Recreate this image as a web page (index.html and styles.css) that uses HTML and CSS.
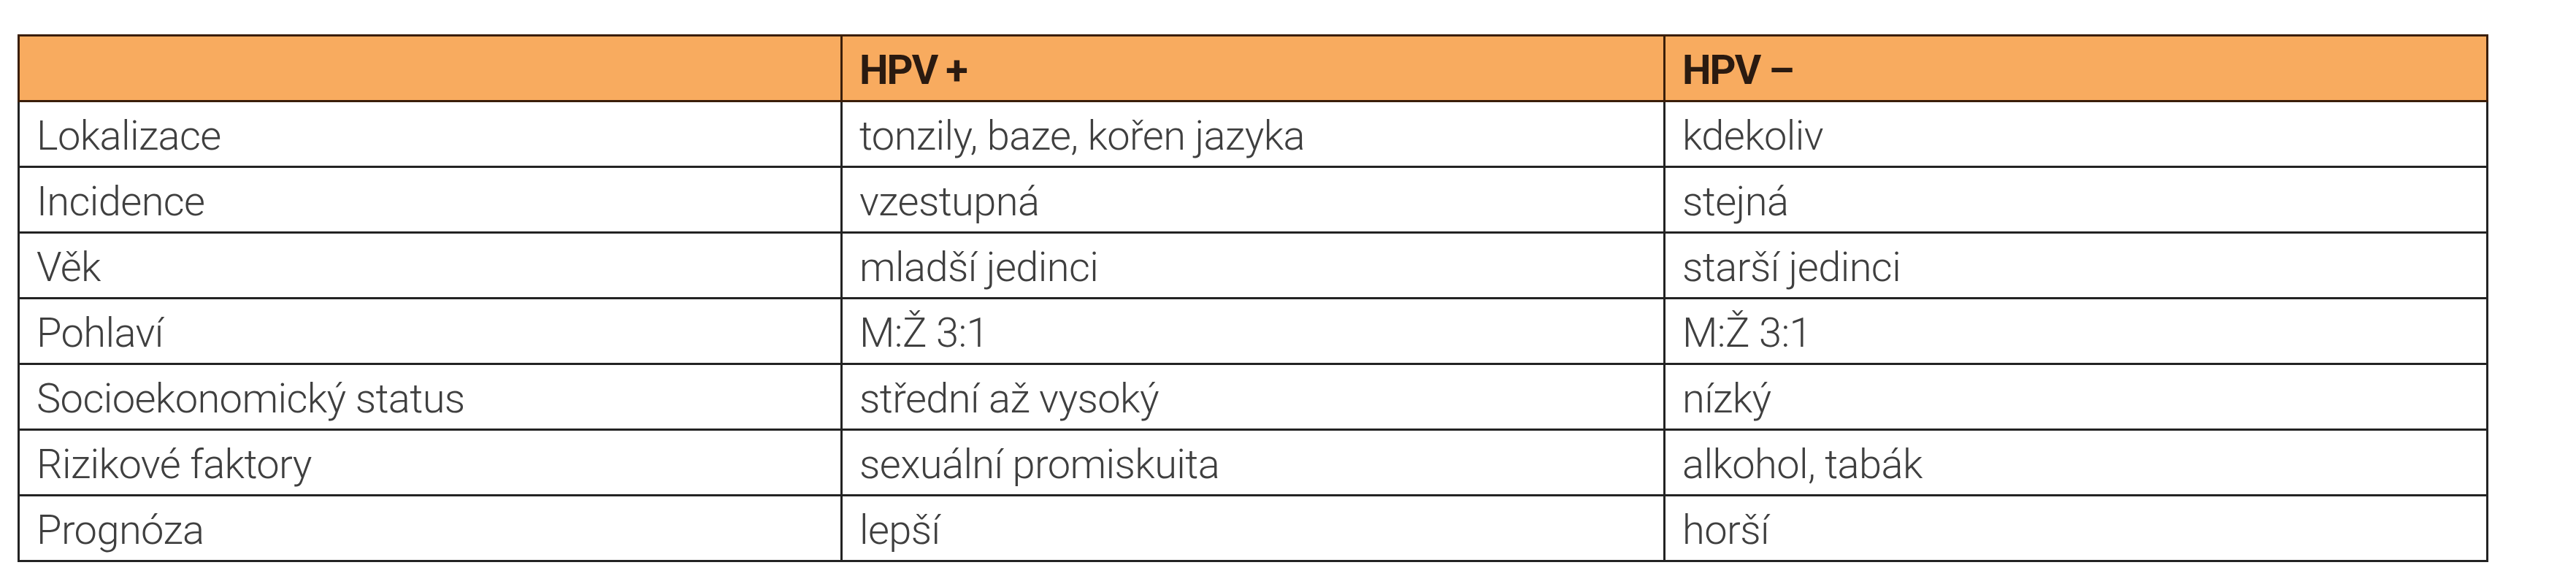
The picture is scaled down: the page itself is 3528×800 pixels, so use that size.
FILE: index.html
```html
<!DOCTYPE html>
<html lang="cs">
<head>
<meta charset="utf-8">
<title>HPV tabulka</title>
<link rel="stylesheet" href="styles.css">
</head>
<body>
<table class="cmp">
  <thead>
    <tr class="head">
      <th class="c"></th>
      <th class="c">HPV +</th>
      <th class="c">HPV –</th>
    </tr>
  </thead>
  <tbody>
    <tr><td class="c">Lokalizace</td><td class="c">tonzily, baze, kořen jazyka</td><td class="c">kdekoliv</td></tr>
    <tr><td class="c">Incidence</td><td class="c">vzestupná</td><td class="c">stejná</td></tr>
    <tr><td class="c">Věk</td><td class="c">mladší jedinci</td><td class="c">starší jedinci</td></tr>
    <tr><td class="c">Pohlaví</td><td class="c">M:Ž 3:1</td><td class="c">M:Ž 3:1</td></tr>
    <tr><td class="c">Socioekonomický status</td><td class="c">střední až vysoký</td><td class="c">nízký</td></tr>
    <tr><td class="c">Rizikové faktory</td><td class="c">sexuální promiskuita</td><td class="c">alkohol, tabák</td></tr>
    <tr><td class="c">Prognóza</td><td class="c">lepší</td><td class="c">horší</td></tr>
  </tbody>
</table>
</body>
</html>
```
FILE: styles.css
```css
html, body {
  margin: 0;
  padding: 0;
  background: #ffffff;
}
body {
  padding: 47px 0 0 24px;
  font-family: Roboto, "Liberation Sans", sans-serif;
}
.cmp {
  border-collapse: collapse;
  width: 3384px;
  table-layout: fixed;
}
.c {
  width: 33.333%;
  height: 83px;
  padding: 4px 23px 0;
  border: 3px solid #232323;
  font-size: 56px;
  line-height: 64px;
  font-weight: 300;
  color: #3f3f3f;
  text-align: left;
  vertical-align: middle;
  letter-spacing: -0.6px;
  white-space: nowrap;
}
.head .c {
  background: #f8ab5f;
  border-color: #3a1e0a;
  font-weight: 700;
  color: #2a1a10;
  letter-spacing: -2px;
}
```
